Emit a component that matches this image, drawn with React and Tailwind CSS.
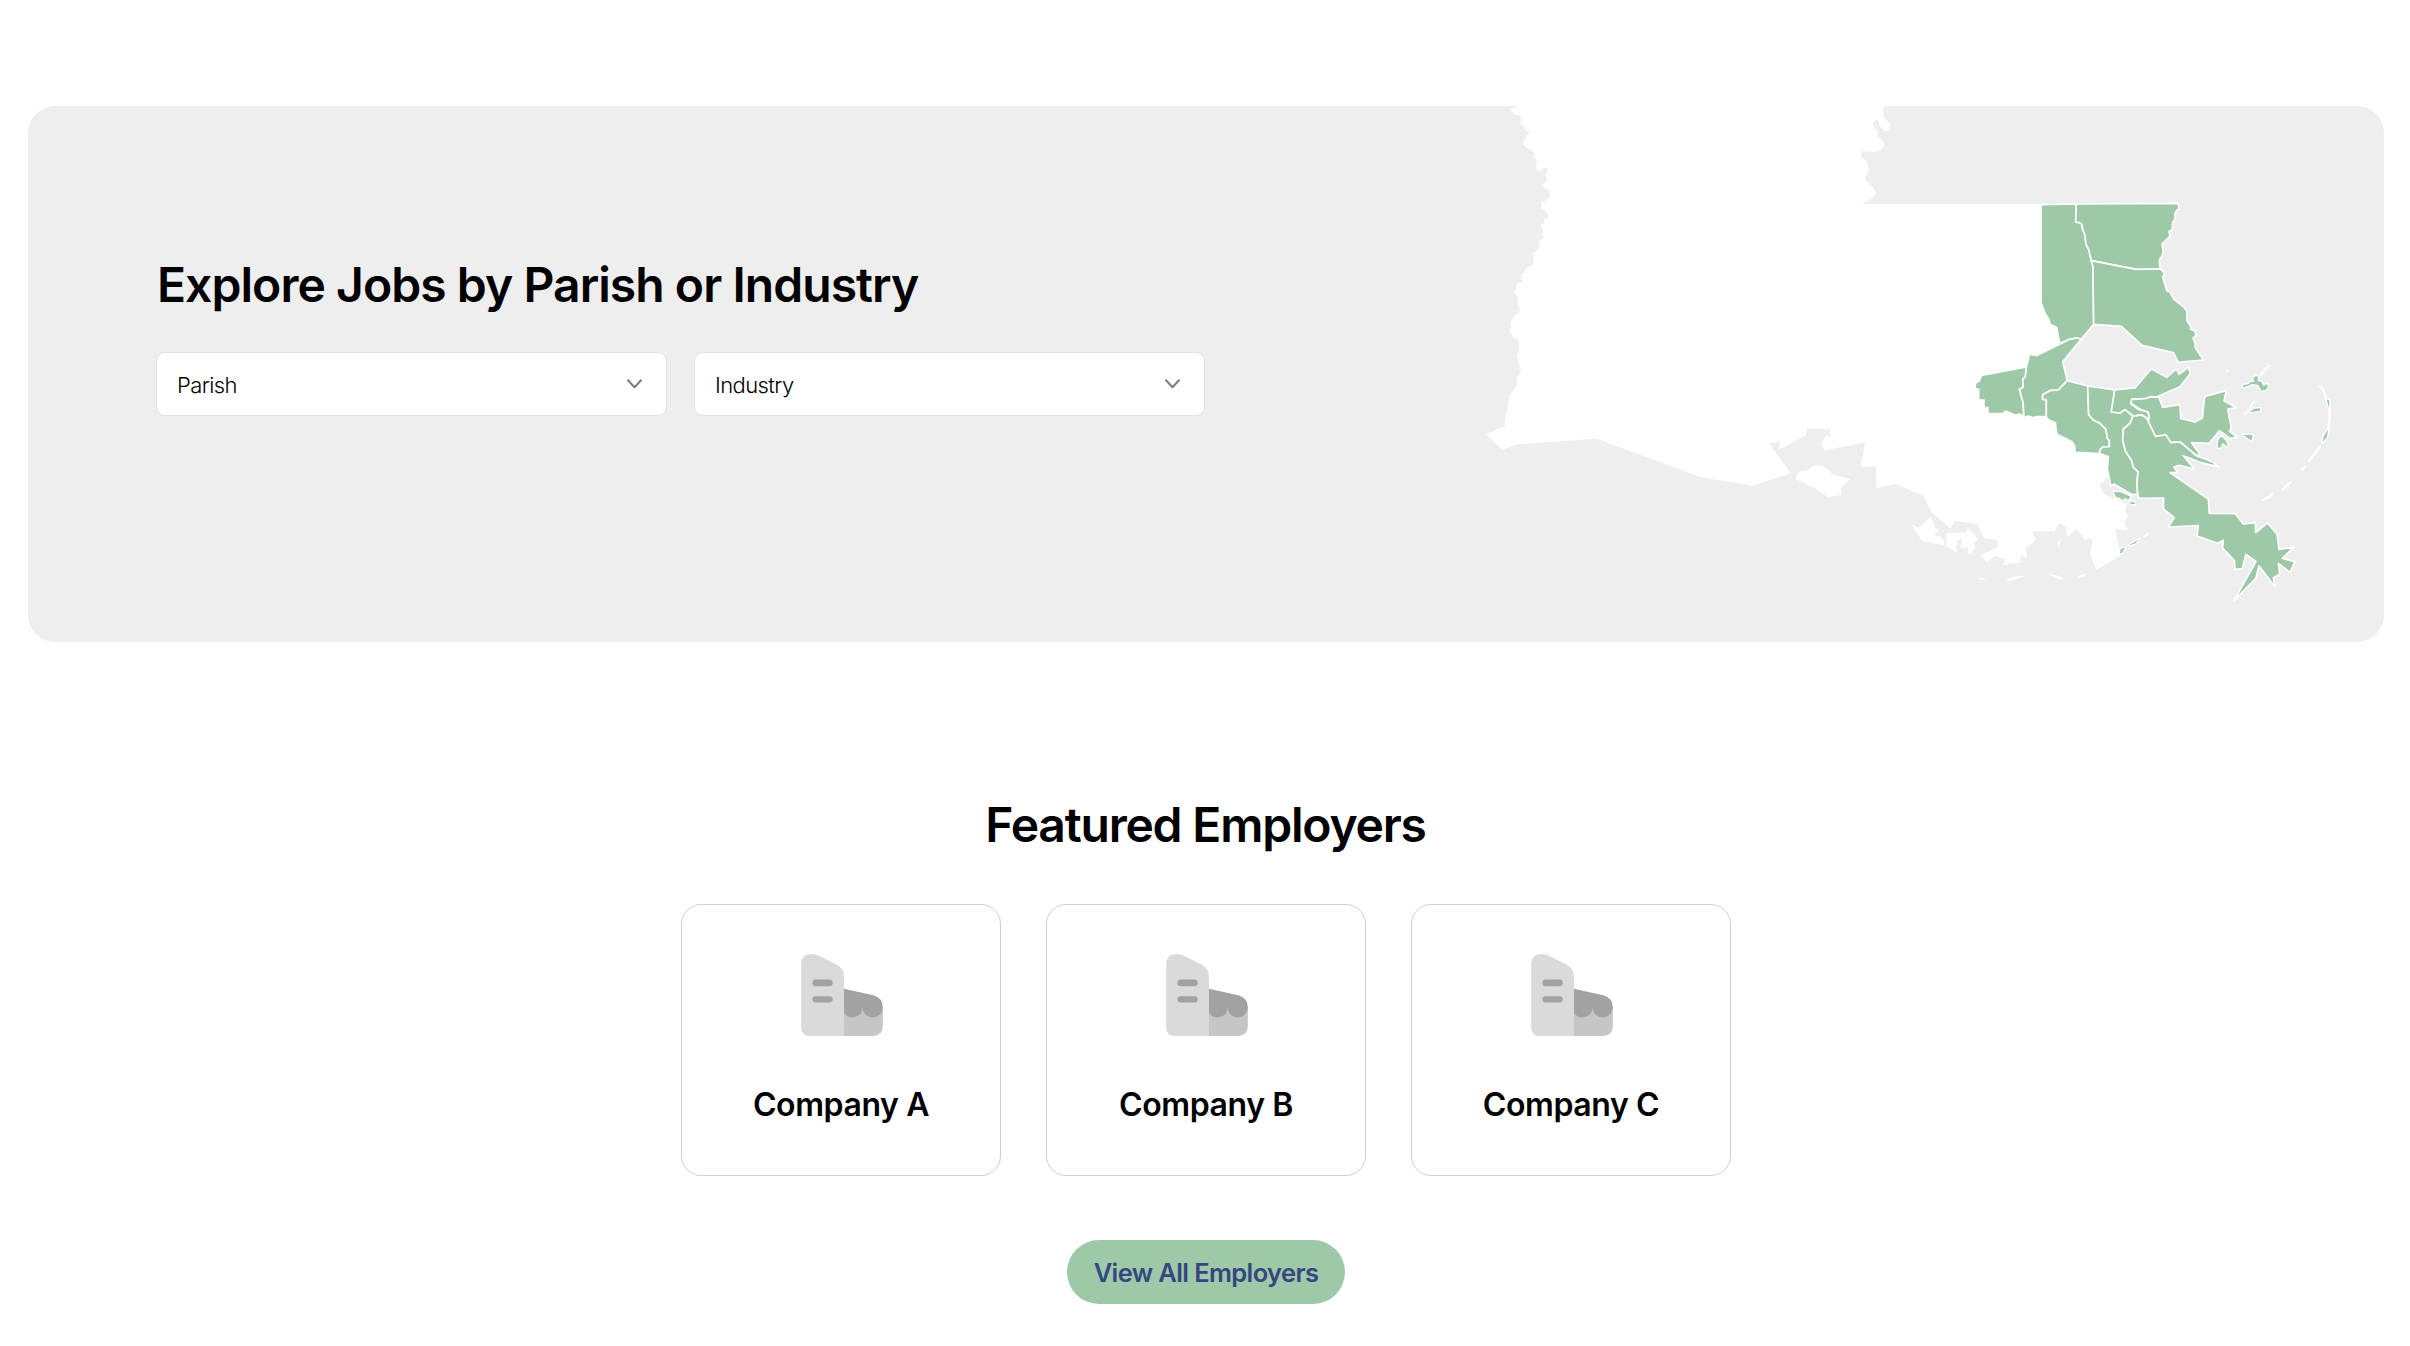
const parishes = [
  // Tangipahoa
  "M273,44 379,42 377,96 389,98 396,103 397,115 404,132 408,163 416,178 424,213 429,230 431,403 394,447 380,444 356,449 330,460 325,440 320,412 300,403 298,390 285,370 273,338Z",
  // Washington
  "M379,42 685,40 687,58 681,60 675,70 674,92 668,96 666,120 657,124 660,138 648,150 636,162 640,185 636,198 628,210 630,237 558,238 424,212 416,178 408,163 404,132 397,115 396,103 389,98 377,96Z",
  // St. Tammany
  "M424,212 558,238 632,237 644,250 638,262 651,302 660,306 672,328 690,342 700,350 711,363 711,393 722,408 722,418 735,423 738,435 729,445 735,458 736,473 760,510 685,517 670,488 576,466 514,409 431,403 429,230Z",
  // St. James
  "M95,556 229,531 226,560 218,568 220,592 208,598 219,636 222,680 208,672 196,676 167,663 160,671 114,670 114,653 102,652 102,630 86,630 86,598 75,595 76,580 88,573Z",
  // St. John the Baptist
  "M238,493 262,496 356,449 380,444 394,447 338,515 352,572 325,600 300,602 278,614 278,628 289,629 289,680 262,680 248,683 236,678 222,682 219,636 208,598 220,592 218,568 226,560 229,531 234,515Z",
  // St. Charles
  "M352,572 413,588 416,674 430,690 450,700 468,718 472,745 478,752 478,770 458,771 450,780 448,791 376,787 374,768 366,755 320,732 316,698 297,690 289,682 289,629 278,628 278,614 300,602 325,600Z",
  // Jefferson
  "M413,588 494,600 484,666 510,669 525,658 549,678 540,700 520,717 518,750 526,783 545,812 550,832 564,845 561,880 563,912 546,914 492,882 483,890 476,855 472,835 475,800 448,791 450,780 458,771 478,770 478,752 472,745 468,718 450,700 430,690 416,674Z",
  // Orleans
  "M494,600 555,594 604,536 650,562 680,536 687,553 715,532 721,551 690,590 626,618 620,622 603,620 585,627 545,628 543,642 565,658 590,664 598,675 597,688 575,674 560,676 558,682 549,678 525,658 510,669 484,666Z",
];

const coastalParishes = [
  // St. Bernard
  "M176,170 188,202 240,194 242,235 285,246 307,234 314,170 379,151 372,183 408,202 383,208 394,264 388,273 411,291 391,296 358,272 328,310 275,308 298,340 294,350 275,335 240,306 212,308 198,285 166,289 143,240 148,236 145,216 125,210 93,190 95,178 135,176 153,170 170,172Z",
  // Plaquemines
  "M108,228 122,225 135,230 143,240 166,289 198,285 212,308 240,306 275,335 290,348 325,360 357,381 300,367 250,347 283,387 237,376 222,381 232,397 210,398 325,477 328,520 406,521 430,552 466,548 467,578 502,549 531,582 537,628 582,621 547,655 585,665 570,697 535,670 539,702 520,714 525,740 477,678 468,714 401,783 413,762 468,664 438,643 427,686 405,688 403,662 368,624 370,601 353,610 291,588 295,557 205,561 223,533 190,507 191,474 117,475 113,462 111,430 114,395 100,382 95,362 76,333 68,300 70,267 90,250 99,228Z",
];

const islands = [
  "M429,136 444,133 452,126 463,125 460,115 468,107 475,113 472,122 484,126 490,138 502,132 503,142 497,150 484,152 474,134 456,132 444,138 429,142Z",
  "M448,216 462,206 481,205 479,213Z",
  "M429,284 458,286 454,302Z",
  "M353,323 355,300 364,289 378,303 384,321 368,308 362,322Z",
  "M680,178 688,182 687,204Z",
  "M685,266 680,292 668,306 672,288Z",
  "M41,456 62,457 92,470 84,480 76,474 66,480 60,474 48,471Z",
  "M90,487 104,486 104,492 92,493Z",
  "M60,640 62,627 75,623 66,640Z",
  "M86,616 120,597 104,611Z",
];

const mainland =
  "M141,30 141,52 121,58 134,75 147,75 153,88 151,98 157,107 165,112 168,125 180,126 160,152 158,160 168,174 177,176 182,182 192,184 192,203 201,209 198,222 197,230 202,240 209,242 222,234 233,235 231,250 226,251 228,263 232,272 218,282 228,296 238,299 237,312 243,320 224,333 214,333 215,348 212,357 222,361 234,374 233,384 223,387 223,398 214,403 214,409 220,423 215,434 222,442 207,457 206,475 189,490 191,500 190,524 168,534 158,552 153,552 155,568 160,576 147,578 139,584 139,596 131,608 144,620 142,642 148,651 149,667 138,672 126,687 121,703 123,711 118,724 132,744 148,752 145,785 141,797 144,815 150,828 148,837 156,840 149,843 149,853 141,860 141,888 118,918 103,1009 49,1033 98,1081 138,1063 380,1046 688,1160 846,1187 963,1150 897,1060 929,1055 926,1079 1008,1036 1012,1015 1080,1017 1081,1043 1071,1034 1054,1059 1062,1081 1185,1058 1172,1129 1219,1131 1219,1193 1277,1182 1360,1217 1385,1267 1442,1316 1453,1293 1523,1302 1542,1345 1583,1350 1582,1372 1532,1396 1551,1419 1573,1397 1604,1407 1601,1425 1652,1417 1652,1397 1670,1405 1669,1370 1680,1368 1698,1348 1686,1324 1753,1324 1767,1298 1787,1310 1792,1340 1818,1318 1850,1354 1854,1343 1868,1350 1860,1393 1878,1440 1952,1397 1935,1316 1973,1320 1963,1297 1974,1280 1965,1260 1970,1242 1903,1213 1887,1186 1915,1160 1918,1130 1900,1085 1840,1060 1770,940 1740,860 1770,758 1740,640 1730,342 1178,342 1183,337 1208,325 1218,310 1207,289 1185,268 1197,240 1190,214 1175,201 1173,183 1215,186 1233,181 1243,168 1241,155 1222,137 1224,120 1213,115 1210,98 1216,90 1226,92 1228,107 1240,120 1253,124 1261,107 1254,93 1240,78 1240,30Z";

function ParishMap() {
  return (
    <svg viewBox="1470 106 914 536" className="h-[536px] w-[914px] shrink-0" aria-hidden="true">
      <g fill="#fff" strokeLinejoin="round">
        <g transform="translate(1470 90) scale(.33333)">
          <path d={mainland} />
          <path d="M976,1160 982,1150 993,1144 1012,1140 1021,1137 1028,1128 1044,1125 1068,1133 1085,1150 1103,1158 1142,1167 1112,1192 1115,1215 1073,1221 1032,1193 990,1174 978,1167Z" />
        </g>
        <g transform="translate(1860 460) scale(.33333)">
          <path d="M153,192 176,204 210,171 218,182 228,208 238,205 236,214 226,220 226,229 240,228 250,240 255,257 186,243Z" />
          <path d="M259,220 316,218 325,204 340,220 354,240 341,247 346,262 334,281 322,283 326,262 302,264 305,236 292,242 288,258 293,278 260,260Z" />
          <path d="M595,260 594,247 605,236 601,248ZM348,354 365,354 382,359 364,359ZM437,363 450,354 465,349 500,347 480,354 460,361ZM562,342 590,346 615,358 600,359ZM648,355 662,344 681,339 672,349Z" />
        </g>
      </g>
      <g fill="#9dc9a8" stroke="#fff" strokeWidth="5" strokeLinejoin="round">
        <g transform="translate(1950 190) scale(.33333)">
          {parishes.map((d) => (
            <path key={d} d={d} />
          ))}
        </g>
        <g transform="translate(2100 340) scale(.33333)">
          {coastalParishes.map((d) => (
            <path key={d} d={d} />
          ))}
          <path
            d="M482,106 494,88 508,77M382,92v2M436,221 449,206 461,186M660,140 670,147 679,178M688,192 689,232 684,270M660,320 628,362M614,381 606,387M572,426 548,449M516,460 511,470 487,480M143,583 133,589"
            fill="none"
            strokeWidth="7"
            strokeLinecap="round"
          />
          {islands.map((d) => (
            <path key={d} d={d} strokeWidth="8" paintOrder="stroke" />
          ))}
          <path d="M292,358 340,371" fill="none" stroke="#9dc9a8" strokeWidth="4" />
        </g>
      </g>
    </svg>
  );
}

function Select({ label }) {
  return (
    <button className="flex h-[64px] w-[511px] items-center justify-between rounded-[9px] border border-[#e2e2e2] bg-white pr-[24px] pl-[20px]">
      <span className="pt-[2px] text-[22px] leading-none font-light tracking-[-0.6px] text-black">{label}</span>
      <svg width="15" height="10" viewBox="0 0 15 10" fill="none" stroke="#7c7c7c" strokeWidth="2" strokeLinecap="round" strokeLinejoin="round">
        <path d="M1 1.2 7.5 8.2 14 1.2" />
      </svg>
    </button>
  );
}

function BuildingIcon() {
  return (
    <svg viewBox="393 521 246 247" className="ml-[2px] h-[82px] w-[82px]" aria-hidden="true">
      <path d="M522 680H639V738Q639 768 608 768H522Z" fill="#c6c6c6" />
      <path d="M522 626 610 645Q639 653 639 682A30.5 30 0 0 1 578 682A30.5 30 0 0 1 522 698Z" fill="#a2a2a2" />
      <path d="M393 555Q393 521 425 521Q436 521 448 527L498 552Q522 565 522 590V768H420Q393 768 393 741Z" fill="#dadada" />
      <rect x="427" y="598" width="61" height="20" rx="10" fill="#a2a2a2" />
      <rect x="427" y="648" width="61" height="19" rx="9.5" fill="#a2a2a2" />
    </svg>
  );
}

function EmployerCard({ name }) {
  return (
    <div className="flex h-[272px] w-[320px] flex-col items-center rounded-[20px] border border-[#d0d0d0] bg-white pt-[49px]">
      <BuildingIcon />
      <h3 className="mt-[53px] text-[32px] leading-[32px] font-semibold tracking-[-0.4px] whitespace-nowrap">{name}</h3>
    </div>
  );
}

export default function App() {
  return (
    <main className="flex h-[1346px] w-[2410px] flex-col items-center bg-white pt-[106px] font-['Inter',sans-serif] text-black">
      <section className="ml-[2px] flex h-[536px] w-[2356px] justify-between overflow-hidden rounded-[27px] bg-[#eee]">
        <div className="pt-[155px] pl-[128px]">
          <h1 className="ml-px w-max text-[48px] leading-[48px] font-semibold tracking-[-0.94px] whitespace-nowrap">Explore Jobs by Parish or Industry</h1>
          <div className="mt-[43px] flex gap-[27px]">
            <Select label="Parish" />
            <Select label="Industry" />
          </div>
        </div>
        <ParishMap />
      </section>
      <h2 className="mt-[159px] ml-px text-[48px] leading-[48px] font-semibold tracking-[-1.2px] whitespace-nowrap">Featured Employers</h2>
      <div className="mt-[55px] ml-[2px] flex gap-[45px]">
        <EmployerCard name="Company A" />
        <EmployerCard name="Company B" />
        <EmployerCard name="Company C" />
      </div>
      <button className="mt-[64px] ml-[2px] flex h-[64px] w-[278px] shrink-0 items-center justify-center rounded-full bg-[#9dc9a8]">
        <span className="pt-[2px] text-[25.5px] font-semibold tracking-[-0.62px] whitespace-nowrap text-[#36467f]">View All Employers</span>
      </button>
    </main>
  );
}
